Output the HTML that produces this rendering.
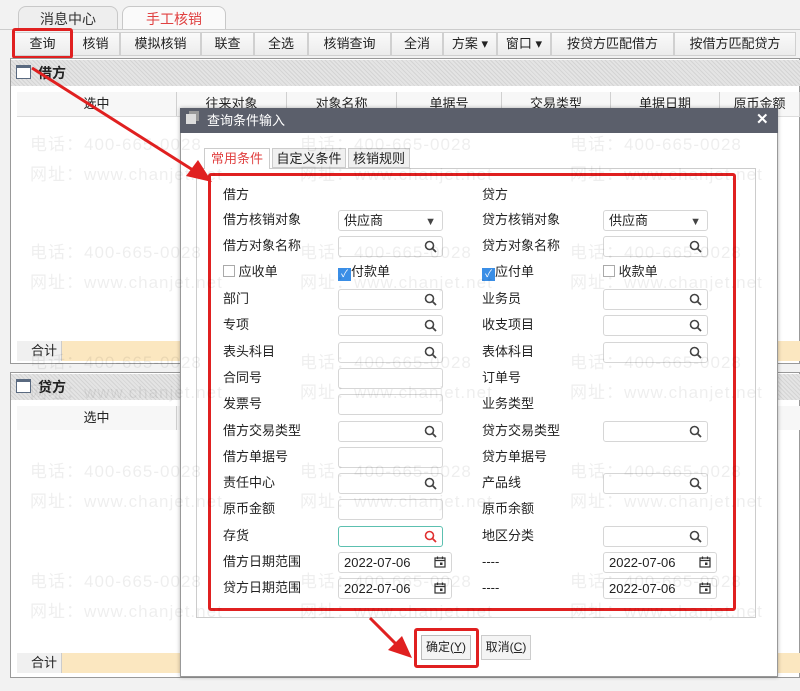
<!DOCTYPE html>
<html><head><meta charset="utf-8"><style>
*{margin:0;padding:0;box-sizing:border-box}
body{width:800px;height:691px;overflow:hidden;background:#f2f2f2;font-family:"Liberation Sans","Noto Sans CJK SC",sans-serif;font-size:13px;color:#222;position:relative}
.a{position:absolute}
.tab{position:absolute;top:6px;height:24px;border:1px solid #c8c8c8;border-bottom:none;border-radius:8px 8px 0 0;background:#eee;text-align:center;line-height:24px;font-size:14px}
.btn{position:absolute;top:32px;height:24px;border:1px solid #d0d0d0;background:linear-gradient(#fafafa,#ececec);text-align:center;line-height:22px;font-size:13px}
.hatch{background-color:#e4e4e4;background-image:repeating-linear-gradient(45deg,#d4d4d4 0 1px,transparent 1px 3px)}
.th{position:absolute;height:24px;border-right:1px solid #d0d0d0;text-align:center;line-height:24px;background:#f7f7f7}
.wm{position:absolute;color:rgba(0,0,0,0.065);font-size:17px;white-space:nowrap;letter-spacing:1px}
.lbl{position:absolute;font-size:13px;line-height:20px}
.in{position:absolute;width:105px;height:21px;border:1px solid #d6d6d6;border-radius:3px;background:#fff;font-size:13px;line-height:19px;padding-left:5px}
.q{position:absolute;right:5px;top:3px;width:13px;height:13px}
</style></head><body>
<div class="tab" style="left:18px;width:100px;color:#333">消息中心</div>
<div class="tab" style="left:122px;width:104px;background:#fafafa;color:#e04040">手工核销</div>
<div class="a" style="left:0;top:29px;width:800px;height:1px;background:#ccc"></div>
<div class="btn" style="left:14px;width:57px">查询</div>
<div class="btn" style="left:71px;width:49px">核销</div>
<div class="btn" style="left:120px;width:81px">模拟核销</div>
<div class="btn" style="left:201px;width:53px">联查</div>
<div class="btn" style="left:254px;width:54px">全选</div>
<div class="btn" style="left:308px;width:83px">核销查询</div>
<div class="btn" style="left:391px;width:52px">全消</div>
<div class="btn" style="left:443px;width:54px">方案 ▾</div>
<div class="btn" style="left:497px;width:54px">窗口 ▾</div>
<div class="btn" style="left:551px;width:123px">按贷方匹配借方</div>
<div class="btn" style="left:674px;width:122px">按借方匹配贷方</div>
<div class="a" style="left:12px;top:28px;width:61px;height:31px;border:3px solid #e02020;border-radius:3px"></div>
<div class="a" style="left:10px;top:58px;width:790px;height:306px;border:1px solid #999;background:#fff"></div>
<div class="a hatch" style="left:11px;top:60px;width:789px;height:26px"></div>
<div class="a" style="left:16px;top:65px;width:15px;height:14px;border:1.5px solid #5a6a80;border-top-width:3px;background:#fff"></div>
<div class="a" style="left:38px;top:63px;font-weight:bold;font-size:14px">借方</div>
<div class="th" style="left:17px;top:92px;width:160px">选中</div>
<div class="th" style="left:177px;top:92px;width:110px">往来对象</div>
<div class="th" style="left:287px;top:92px;width:110px">对象名称</div>
<div class="th" style="left:397px;top:92px;width:105px">单据号</div>
<div class="th" style="left:502px;top:92px;width:109px">交易类型</div>
<div class="th" style="left:611px;top:92px;width:109px">单据日期</div>
<div class="th" style="left:720px;top:92px;width:80px">原币金额</div>
<div class="a" style="left:17px;top:116px;width:783px;height:1px;background:#ddd"></div>
<div class="a" style="left:17px;top:341px;width:783px;height:20px;background:#fbe7c0"></div>
<div class="a" style="left:17px;top:341px;width:45px;height:20px;background:#f0f0f0;border-right:1px solid #ccc;line-height:20px;padding-left:14px">合计</div>
<div class="a" style="left:10px;top:372px;width:790px;height:306px;border:1px solid #999;background:#fff"></div>
<div class="a hatch" style="left:11px;top:374px;width:789px;height:26px"></div>
<div class="a" style="left:16px;top:379px;width:15px;height:14px;border:1.5px solid #5a6a80;border-top-width:3px;background:#fff"></div>
<div class="a" style="left:38px;top:377px;font-weight:bold;font-size:14px">贷方</div>
<div class="th" style="left:17px;top:406px;width:160px">选中</div>
<div class="th" style="left:177px;top:406px;width:623px;border:none"></div>
<div class="a" style="left:17px;top:653px;width:783px;height:20px;background:#fbe7c0"></div>
<div class="a" style="left:17px;top:653px;width:45px;height:20px;background:#f0f0f0;border-right:1px solid #ccc;line-height:20px;padding-left:14px">合计</div>
<div class="a" style="left:180px;top:108px;width:598px;height:569px;background:#fff;border:1px solid #999;box-shadow:0 0 4px rgba(0,0,0,.3)"></div>
<div class="a" style="left:180px;top:108px;width:598px;height:25px;background:#5b5f6b;color:#fff;line-height:25px;padding-left:27px;font-size:13px">查询条件输入</div>
<div class="a" style="left:186px;top:114px;width:10px;height:10px;background:#ddd;box-shadow:3px -3px 0 #999"></div>
<div class="a" style="left:756px;top:110px;color:#fff;font-weight:bold;font-size:15px">✕</div>
<div class="a" style="left:196px;top:168px;width:560px;height:450px;border:1px solid #ccc;background:#fff"></div>
<div class="a" style="left:204px;top:148px;width:66px;height:21px;border:1px solid #ccc;border-bottom:none;background:#fff;color:#e04040;text-align:center;line-height:20px">常用条件</div>
<div class="a" style="left:272px;top:148px;width:74px;height:20px;border:1px solid #ccc;background:#f0f0f0;text-align:center;line-height:19px">自定义条件</div>
<div class="a" style="left:348px;top:148px;width:62px;height:20px;border:1px solid #ccc;background:#f0f0f0;text-align:center;line-height:19px">核销规则</div>
<div class="a" style="left:208px;top:173px;width:528px;height:438px;border:3px solid #e02020;border-radius:3px"></div>

<div class="lbl" style="left:223px;top:185px">借方</div><div class="lbl" style="left:482px;top:185px">贷方</div>
<div class="lbl" style="left:223px;top:210px">借方核销对象</div><div class="in" style="left:338px;top:210px">供应商<span class="a" style="right:6px;top:2px;font-size:11px;color:#444">▼</span></div>
<div class="lbl" style="left:482px;top:210px">贷方核销对象</div><div class="in" style="left:603px;top:210px">供应商<span class="a" style="right:6px;top:2px;font-size:11px;color:#444">▼</span></div>
<div class="lbl" style="left:223px;top:236px">借方对象名称</div><div class="lbl" style="left:482px;top:236px">贷方对象名称</div>
<div class="lbl" style="left:223px;top:262px"><span style="display:inline-block;width:12px;height:12px;border:1px solid #aaa;vertical-align:-1px"></span> 应收单</div>
<div class="lbl" style="left:338px;top:262px"><span style="display:inline-block;width:13px;height:13px;background:#3a8ee6;color:#fff;font-size:10px;line-height:13px;text-align:center;vertical-align:-1px">✓</span>付款单</div>
<div class="lbl" style="left:482px;top:262px"><span style="display:inline-block;width:13px;height:13px;background:#3a8ee6;color:#fff;font-size:10px;line-height:13px;text-align:center;vertical-align:-1px">✓</span>应付单</div>
<div class="lbl" style="left:603px;top:262px"><span style="display:inline-block;width:12px;height:12px;border:1px solid #aaa;vertical-align:-1px"></span> 收款单</div>
<div class="lbl" style="left:223px;top:289px">部门</div><div class="lbl" style="left:482px;top:289px">业务员</div>
<div class="lbl" style="left:223px;top:315px">专项</div><div class="lbl" style="left:482px;top:315px">收支项目</div>
<div class="lbl" style="left:223px;top:342px">表头科目</div><div class="lbl" style="left:482px;top:342px">表体科目</div>
<div class="lbl" style="left:223px;top:368px">合同号</div><div class="lbl" style="left:482px;top:368px">订单号</div>
<div class="lbl" style="left:223px;top:394px">发票号</div><div class="lbl" style="left:482px;top:394px">业务类型</div>
<div class="lbl" style="left:223px;top:421px">借方交易类型</div><div class="lbl" style="left:482px;top:421px">贷方交易类型</div>
<div class="lbl" style="left:223px;top:447px">借方单据号</div><div class="lbl" style="left:482px;top:447px">贷方单据号</div>
<div class="lbl" style="left:223px;top:473px">责任中心</div><div class="lbl" style="left:482px;top:473px">产品线</div>
<div class="lbl" style="left:223px;top:499px">原币金额</div><div class="lbl" style="left:482px;top:499px">原币余额</div>
<div class="lbl" style="left:223px;top:526px">存货</div><div class="lbl" style="left:482px;top:526px">地区分类</div>
<div class="lbl" style="left:223px;top:552px">借方日期范围</div><div class="lbl" style="left:482px;top:552px">----</div>
<div class="lbl" style="left:223px;top:578px">贷方日期范围</div><div class="lbl" style="left:482px;top:578px">----</div>

<svg width="0" height="0" style="position:absolute"><defs><symbol id="s" viewBox="0 0 13 13"><circle cx="5.5" cy="5.5" r="4" fill="none" stroke="currentColor" stroke-width="1.6"/><path d="M8.5 8.5L12 12" stroke="currentColor" stroke-width="1.8"/></symbol><symbol id="c" viewBox="0 0 12 12"><rect x="1" y="2" width="10" height="9" fill="none" stroke="#333" stroke-width="1.2"/><path d="M1 4.5H11M3.5 0.5V3M8.5 0.5V3" stroke="#333" stroke-width="1.2"/><rect x="6" y="6.5" width="2.5" height="2.5" fill="#333"/></symbol></defs></svg>
<div class="in" style="left:338px;top:236px;color:#444"><svg class="q"><use href="#s"/></svg></div>
<div class="in" style="left:603px;top:236px;color:#444"><svg class="q"><use href="#s"/></svg></div>
<div class="in" style="left:338px;top:289px;color:#444"><svg class="q"><use href="#s"/></svg></div>
<div class="in" style="left:603px;top:289px;color:#444"><svg class="q"><use href="#s"/></svg></div>
<div class="in" style="left:338px;top:315px;color:#444"><svg class="q"><use href="#s"/></svg></div>
<div class="in" style="left:603px;top:315px;color:#444"><svg class="q"><use href="#s"/></svg></div>
<div class="in" style="left:338px;top:342px;color:#444"><svg class="q"><use href="#s"/></svg></div>
<div class="in" style="left:603px;top:342px;color:#444"><svg class="q"><use href="#s"/></svg></div>
<div class="in" style="left:338px;top:368px"></div>
<div class="in" style="left:338px;top:394px"></div>
<div class="in" style="left:338px;top:421px;color:#444"><svg class="q"><use href="#s"/></svg></div>
<div class="in" style="left:603px;top:421px;color:#444"><svg class="q"><use href="#s"/></svg></div>
<div class="in" style="left:338px;top:447px"></div>
<div class="in" style="left:338px;top:473px;color:#444"><svg class="q"><use href="#s"/></svg></div>
<div class="in" style="left:603px;top:473px;color:#444"><svg class="q"><use href="#s"/></svg></div>
<div class="in" style="left:338px;top:499px"></div>
<div class="in" style="left:338px;top:526px;border-color:#5cc0b0;color:#e03030"><svg class="q"><use href="#s"/></svg></div>
<div class="in" style="left:603px;top:526px;color:#444"><svg class="q"><use href="#s"/></svg></div>
<div class="in" style="left:338px;top:552px;width:114px">2022-07-06<svg class="q" style="width:12px;height:12px"><use href="#c"/></svg></div>
<div class="in" style="left:603px;top:552px;width:114px">2022-07-06<svg class="q" style="width:12px;height:12px"><use href="#c"/></svg></div>
<div class="in" style="left:338px;top:578px;width:114px">2022-07-06<svg class="q" style="width:12px;height:12px"><use href="#c"/></svg></div>
<div class="in" style="left:603px;top:578px;width:114px">2022-07-06<svg class="q" style="width:12px;height:12px"><use href="#c"/></svg></div>

<div class="a" style="left:421px;top:635px;width:50px;height:25px;border:1px solid #bbb;background:#f4f4f4;text-align:center;line-height:23px;font-size:12px">确定(<u>Y</u>)</div>
<div class="a" style="left:481px;top:635px;width:50px;height:25px;border:1px solid #ccc;background:#f4f4f4;text-align:center;line-height:23px;font-size:12px">取消(<u>C</u>)</div>
<div class="a" style="left:414px;top:628px;width:65px;height:40px;border:3px solid #e02020;border-radius:3px"></div>

<div class="wm" style="left:30px;top:130px">电话：400-665-0028</div><div class="wm" style="left:300px;top:130px">电话：400-665-0028</div><div class="wm" style="left:570px;top:130px">电话：400-665-0028</div>
<div class="wm" style="left:30px;top:160px">网址：www.chanjet.net</div><div class="wm" style="left:300px;top:160px">网址：www.chanjet.net</div><div class="wm" style="left:570px;top:160px">网址：www.chanjet.net</div>
<div class="wm" style="left:30px;top:238px">电话：400-665-0028</div><div class="wm" style="left:300px;top:238px">电话：400-665-0028</div><div class="wm" style="left:570px;top:238px">电话：400-665-0028</div>
<div class="wm" style="left:30px;top:268px">网址：www.chanjet.net</div><div class="wm" style="left:300px;top:268px">网址：www.chanjet.net</div><div class="wm" style="left:570px;top:268px">网址：www.chanjet.net</div>
<div class="wm" style="left:30px;top:348px">电话：400-665-0028</div><div class="wm" style="left:300px;top:348px">电话：400-665-0028</div><div class="wm" style="left:570px;top:348px">电话：400-665-0028</div>
<div class="wm" style="left:30px;top:378px">网址：www.chanjet.net</div><div class="wm" style="left:300px;top:378px">网址：www.chanjet.net</div><div class="wm" style="left:570px;top:378px">网址：www.chanjet.net</div>
<div class="wm" style="left:30px;top:457px">电话：400-665-0028</div><div class="wm" style="left:300px;top:457px">电话：400-665-0028</div><div class="wm" style="left:570px;top:457px">电话：400-665-0028</div>
<div class="wm" style="left:30px;top:487px">网址：www.chanjet.net</div><div class="wm" style="left:300px;top:487px">网址：www.chanjet.net</div><div class="wm" style="left:570px;top:487px">网址：www.chanjet.net</div>
<div class="wm" style="left:30px;top:567px">电话：400-665-0028</div><div class="wm" style="left:300px;top:567px">电话：400-665-0028</div><div class="wm" style="left:570px;top:567px">电话：400-665-0028</div>
<div class="wm" style="left:30px;top:597px">网址：www.chanjet.net</div><div class="wm" style="left:300px;top:597px">网址：www.chanjet.net</div><div class="wm" style="left:570px;top:597px">网址：www.chanjet.net</div>

<svg class="a" style="left:0;top:0" width="800" height="691">
<line x1="32" y1="68" x2="196" y2="172" stroke="#e02020" stroke-width="3"/>
<polygon points="212,182 186,176 198,160" fill="#e02020"/>
<line x1="370" y1="618" x2="398" y2="646" stroke="#e02020" stroke-width="3"/>
<polygon points="412,658 388,650 402,636" fill="#e02020"/>
</svg>
</body></html>
